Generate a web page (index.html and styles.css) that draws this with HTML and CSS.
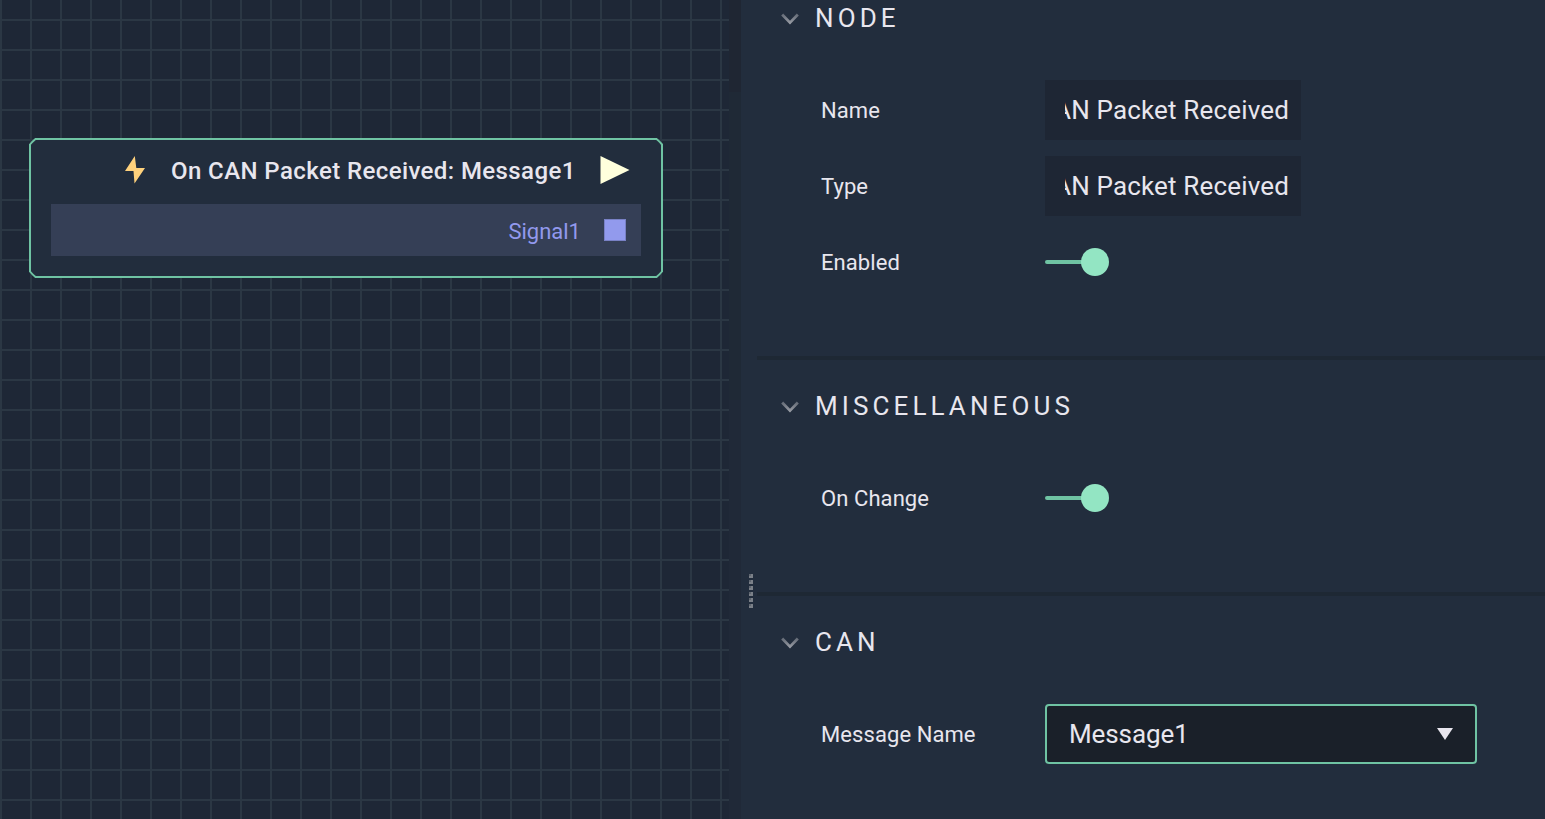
FILE: index.html
```html
<!DOCTYPE html>
<html lang="en">
<head>
<meta charset="utf-8">
<title>Node editor</title>
<link rel="stylesheet" href="styles.css">
</head>
<body>
<div class="app">
  <main class="canvas">
    <article class="node">
      <svg class="node-frame" width="634" height="140" viewBox="0 0 634 140"><path d="M6.5 1H627.5Q629 2 633 6.5V133.500Q631 136 627.5 139H6.500Q3 136 1 133.500V6.500Q3 4 6.500 1Z"/></svg>
      <header class="node-head">
        <svg class="bolt" width="22" height="28" viewBox="0 0 22 28"><path d="M10.8 0L1 15H9.5L10.5 27.5L21 12H12.3Z"/></svg>
        <h1 class="node-title">On CAN Packet Received: Message1</h1>
        <svg class="exec-pin" width="30" height="30" viewBox="0 0 30 30"><path d="M.5 1L29.5 15L.5 29Z"/></svg>
      </header>
      <div class="port">
        <span class="port-name">Signal1</span>
        <span class="port-pin"></span>
      </div>
    </article>
  </main>
  <div class="gutter"></div>
  <aside class="panel">
    <div class="grip"><i></i><i></i><i></i><i></i><i></i><i></i></div>
    <div class="sections">
      <section class="section">
        <h2 class="section-head"><svg class="chevron" width="18" height="12" viewBox="0 0 18 12"><defs><linearGradient id="fade" gradientUnits="userSpaceOnUse" x1="0" y1="0" x2="0" y2="12"><stop offset="0" stop-color="#5d6470"/><stop offset="1" stop-color="#a2a5ad"/></linearGradient></defs><path d="M1.200 1.500L9 9.600L16.800 1.500"/></svg><span class="section-title">NODE</span></h2>
        <div class="row"><span class="label">Name</span><div class="field"><div class="field-text">On CAN Packet Received</div></div></div>
        <div class="row"><span class="label">Type</span><div class="field"><div class="field-text">On CAN Packet Received</div></div></div>
        <div class="row"><span class="label">Enabled</span><div class="toggle"><span class="track"></span><span class="knob"></span></div></div>
      </section>
      <section class="section">
        <h2 class="section-head"><svg class="chevron" width="18" height="12" viewBox="0 0 18 12"><path d="M1.200 1.500L9 9.600L16.800 1.500"/></svg><span class="section-title">MISCELLANEOUS</span></h2>
        <div class="row"><span class="label">On Change</span><div class="toggle"><span class="track"></span><span class="knob"></span></div></div>
      </section>
      <section class="section">
        <h2 class="section-head"><svg class="chevron" width="18" height="12" viewBox="0 0 18 12"><path d="M1.200 1.500L9 9.600L16.800 1.500"/></svg><span class="section-title">CAN</span></h2>
        <div class="row"><span class="label">Message Name</span><div class="select"><span>Message1</span><svg width="16" height="12" viewBox="0 0 16 12"><path d="M0 0H16L8 12Z"/></svg></div></div>
      </section>
    </div>
  </aside>
</div>
</body>
</html>
```
FILE: styles.css
```css
* { box-sizing: border-box; }
body { margin: 0; font-family: Roboto, "Liberation Sans", sans-serif; color: #e8e6ee; }
.app { display: flex; width: 1545px; height: 819px; overflow: hidden; background: #222d3d; }

.canvas {
  width: 729px;
  padding: 138px 0 0 29px;
  background-color: #1e2736;
  background-image:
    linear-gradient(90deg, #2b3744 2px, transparent 2px),
    linear-gradient(#2b3744 2px, transparent 2px);
  background-size: 30px 30px;
  background-position: 0 0, 0 19px;
}
.gutter { width: 12px; background: linear-gradient(#1f2633 0 92px, #1f2936 92px 400px, #202938 400px); }

.node { position: relative; width: 634px; height: 140px; padding: 2px 22px 22px; }
.node-frame { position: absolute; inset: 0; fill: #222d3d; stroke: #6fc3a3; stroke-width: 2; }
.node-head { position: relative; display: flex; align-items: center; height: 64px; padding: 0 11px 4px 73px; }
.bolt { fill: #ffd17c; }
.node-title { margin: 0 0 0 25px; padding-top: 1px; font-size: 24px; font-weight: 500; line-height: 32px; letter-spacing: .41px; white-space: nowrap; }
.exec-pin { margin-left: auto; fill: #ffffdc; }
.port { position: relative; display: flex; align-items: center; justify-content: flex-end; gap: 23px; height: 52px; padding-right: 15px; background: #353f56; }
.port-name { padding-top: 2px; color: #9299ed; font-size: 22px; }
.port-pin { width: 22px; height: 22px; border: 1px solid #7981c5; background: #929aed; }

.panel { display: flex; width: 804px; background: #222d3d; }
.grip { display: flex; flex-direction: column; gap: 2px; width: 16px; padding: 574px 0 0 8px; }
.grip i { width: 4px; height: 4px; background: linear-gradient(#5f6670, #5f6670) 0 0 / 2px 2px no-repeat #7b8088; }
.sections { flex: 1; margin-top: -28px; }
.section { display: flex; flex-direction: column; gap: 16px; padding: 16px 0 64px 24px; border-bottom: 4px solid #1e2834; }
.section:last-child { border-bottom: 0; }
.section-head { display: flex; align-items: center; gap: 16px; height: 60px; margin: 0 0 16px; font-size: 26px; font-weight: 400; letter-spacing: 4.1px; }
.chevron { fill: none; stroke: url(#fade); stroke-width: 2.8; margin-top: 2px; }
.row { display: flex; align-items: center; height: 60px; padding-left: 40px; }
.label { width: 224px; font-size: 22px; letter-spacing: .08px; }
.field { width: 256px; height: 60px; padding: 0 12px 0 20px; background: #1e2634; }
.field-text { display: flex; justify-content: flex-end; overflow: hidden; font-size: 26px; line-height: 60px; letter-spacing: .16px; white-space: nowrap; }
.toggle { display: flex; align-items: center; width: 64px; }
.track { width: 40px; height: 4px; margin-right: -4px; border-radius: 2px; background: #6fc3a3; }
.knob { width: 28px; height: 28px; border-radius: 50%; background: #93e5c3; }
.select { display: flex; align-items: center; justify-content: space-between; width: 432px; height: 60px; padding: 0 22px; border: 2px solid #6fc3a3; border-radius: 4px; background: #1a2029; font-size: 26px; letter-spacing: -.1px; }
.select svg { fill: #e8e6ee; }
```
